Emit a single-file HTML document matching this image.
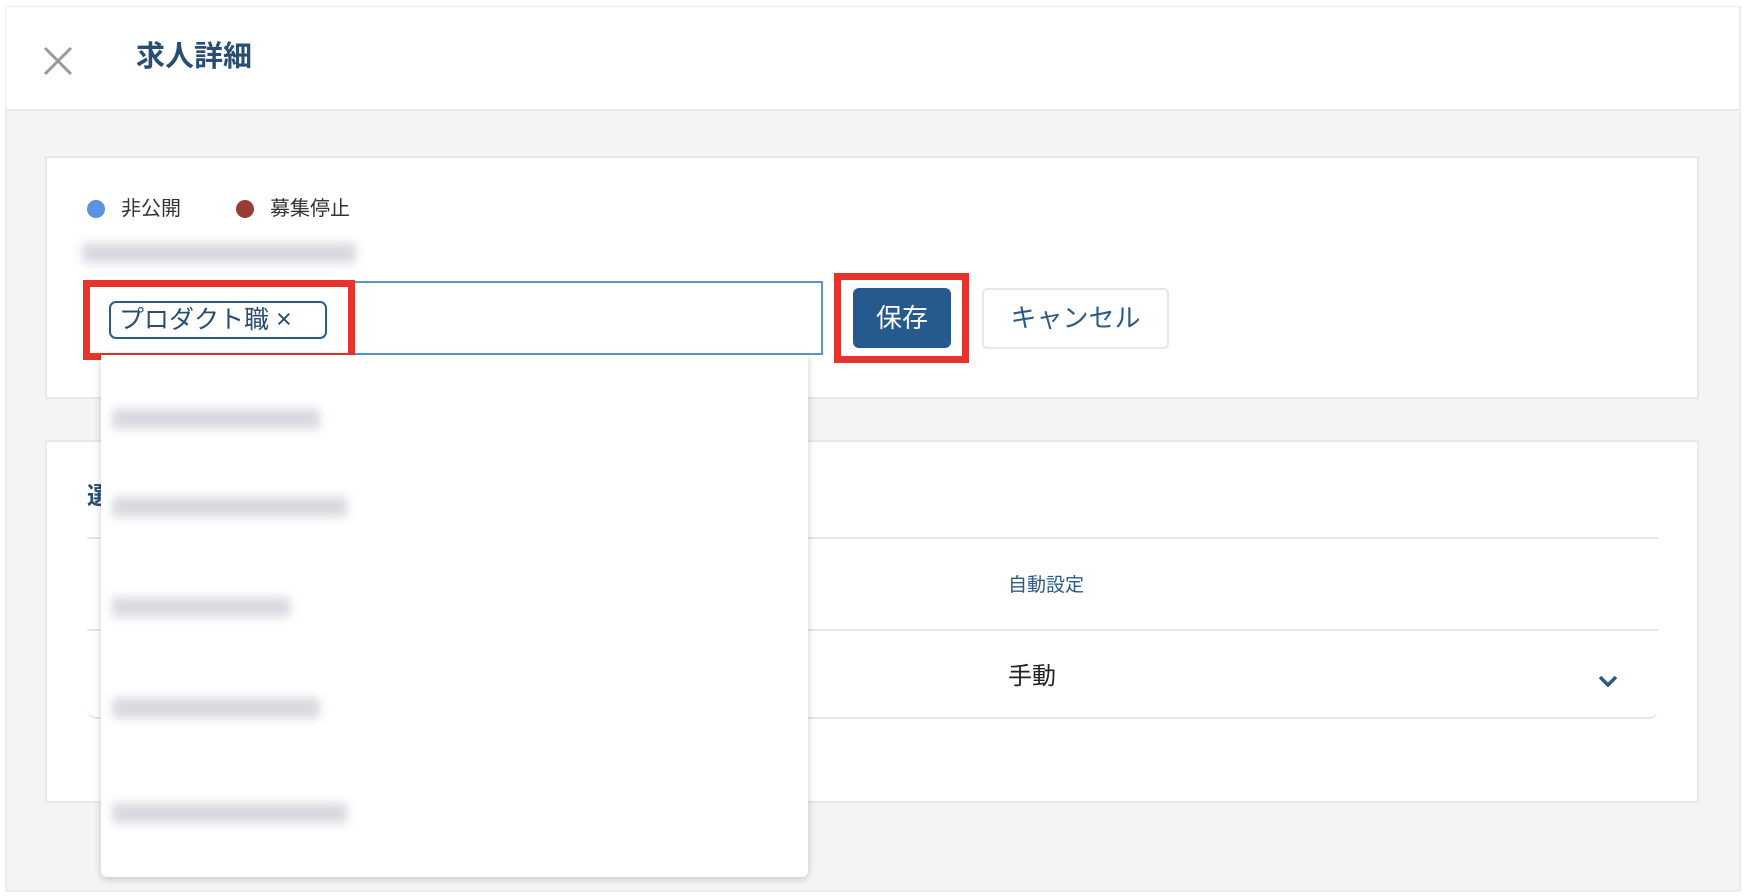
<!DOCTYPE html>
<html><head><meta charset="utf-8"><style>
*{margin:0;padding:0;box-sizing:border-box}
body{width:1746px;height:896px;background:#fff;position:relative;overflow:hidden;font-family:"Liberation Sans","Noto Sans CJK JP",sans-serif}
.a{position:absolute}
.blur{position:absolute;background:#d6d9df;filter:blur(5px);height:20px;border-radius:3px}
</style></head><body>
<div class="a" style="left:5px;top:6px;width:1736px;height:886px;background:#f4f4f4;border:2px solid #ececec"></div>
<div class="a" style="left:6px;top:7px;width:1733px;height:104px;background:#fff;border-bottom:2px solid #e8e8e8"></div>
<svg class="a" style="left:42px;top:45px" width="32" height="32" viewBox="0 0 32 32"><path d="M3 3L29 29M29 3L3 29" stroke="#999" stroke-width="3"/></svg>
<div class="a" style="left:136px;top:39px;font-size:29px;font-weight:bold;color:#2a4d73;line-height:36px">求人詳細</div>

<div class="a" style="left:45px;top:156px;width:1654px;height:243px;background:#fff;border:2px solid #e8e8e8"></div>
<div class="a" style="left:87px;top:200px;width:18px;height:18px;border-radius:50%;background:#5b93e0"></div>
<div class="a" style="left:121px;top:197px;font-size:20px;color:#333;line-height:24px">非公開</div>
<div class="a" style="left:236px;top:200px;width:18px;height:18px;border-radius:50%;background:#9a3b3b"></div>
<div class="a" style="left:270px;top:197px;font-size:20px;color:#333;line-height:24px">募集停止</div>
<div class="blur" style="left:82px;top:243px;width:274px"></div>

<div class="a" style="left:83px;top:281px;width:740px;height:74px;border:2px solid #5a95d6;background:#fff"></div>
<div class="a" style="left:83px;top:280px;width:272px;height:80px;border:7px solid #e8322a"></div>
<div class="a" style="left:109px;top:301px;width:218px;height:38px;border:2px solid #2d5a8a;border-radius:7px;font-size:25px;color:#2a4d73;line-height:33px;padding-left:8px;white-space:nowrap">プロダクト職 <span style="font-size:27px">×</span></div>

<div class="a" style="left:834px;top:273px;width:135px;height:90px;border:7px solid #e8322a"></div>
<div class="a" style="left:853px;top:288px;width:98px;height:60px;background:#265a8f;border-radius:6px;color:#fff;font-size:26px;line-height:60px;text-align:center">保存</div>
<div class="a" style="left:982px;top:288px;width:187px;height:61px;background:#fff;border:2px solid #e6e8ec;border-radius:5px;color:#2a5a8a;font-size:26px;line-height:57px;text-align:center">キャンセル</div>

<div class="a" style="left:45px;top:440px;width:1654px;height:363px;background:#fff;border:2px solid #e8e8e8"></div>
<div class="a" style="left:87px;top:476px;font-size:24px;font-weight:bold;color:#2a4d73">選</div>
<div class="a" style="left:87px;top:537px;width:1571px;height:182px;border-top:2px solid #e8e8e8;border-bottom:2px solid #e8e8e8;border-radius:0 0 10px 10px"></div>
<div class="a" style="left:87px;top:629px;width:1571px;height:2px;background:#e8e8e8"></div>
<div class="a" style="left:1008px;top:570px;font-size:19px;color:#2a5a8a">自動設定</div>
<div class="a" style="left:1008px;top:656px;font-size:24px;color:#222">手動</div>
<svg class="a" style="left:1597px;top:673px" width="22" height="16" viewBox="0 0 22 16"><path d="M3 4L11 12L19 4" fill="none" stroke="#2a5a8a" stroke-width="3.5"/></svg>

<div class="a" style="left:101px;top:355px;width:707px;height:522px;background:#fff;border-radius:0 0 6px 6px;box-shadow:0 2px 8px rgba(0,0,0,.2)"></div>
<div class="blur" style="left:112px;top:409px;width:208px"></div>
<div class="blur" style="left:112px;top:497px;width:235px"></div>
<div class="blur" style="left:112px;top:597px;width:178px"></div>
<div class="blur" style="left:112px;top:698px;width:208px"></div>
<div class="blur" style="left:112px;top:803px;width:235px"></div>
</body></html>
